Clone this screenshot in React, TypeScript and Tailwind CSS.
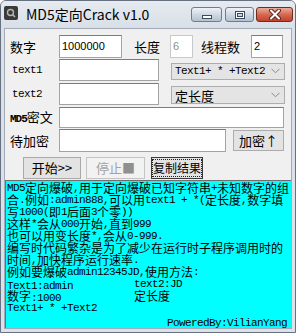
import React from "react";

const CJK = "font-['Noto_Sans_CJK_SC',sans-serif]";
const MONO = "font-['Liberation_Mono','Noto_Sans_CJK_SC',monospace] text-[11px] tracking-[-0.6px]";

// split a string in runs so ascii gets the narrow monospace, chinese the CJK font
function Mixed({ text, cjkSize = "text-[12px]" }: { text: string; cjkSize?: string }) {
  const runs = text.match(/[\x00-\x7f]+|[^\x00-\x7f]+/g) || [];
  return (
    <>
      {runs.map((r, i) =>
        /^[\x00-\x7f]/.test(r) ? (
          <span key={i} className={`${MONO} leading-[12px]`}>
            {r}
          </span>
        ) : (
          <span key={i} className={`${CJK} ${cjkSize} leading-[12px]`}>
            {r}
          </span>
        )
      )}
    </>
  );
}

function Label({ children, className = "" }: { children: React.ReactNode; className?: string }) {
  return (
    <div className={`shrink-0 text-[13px] leading-none text-black ${CJK} ${className}`}>
      {children}
    </div>
  );
}

function Input({ value = "", className = "", disabled = false }: { value?: string; className?: string; disabled?: boolean }) {
  return (
    <div
      className={`shrink-0 h-full bg-white border flex items-center pl-[2px] font-['Liberation_Sans',sans-serif] text-[11px] ${
        disabled
          ? "border-[#c9c9c9] text-[#8e8e8e]"
          : "border-[#a3a3a3] border-t-[#7c7c7c] text-black"
      } ${className}`}
    >
      {value}
    </div>
  );
}

function Select({ children, className = "" }: { children: React.ReactNode; className?: string }) {
  return (
    <div
      className={`shrink-0 relative bg-[#e4e4e4] border border-[#adadad] flex items-center pl-[3px] leading-none ${className}`}
    >
      {children}
      <svg className="absolute right-[4px] top-1/2 -translate-y-1/2" width="9" height="6" viewBox="0 0 9 6">
        <path d="M0.5 0.8 L4.5 4.8 L8.5 0.8" fill="none" stroke="#8a8a8a" strokeWidth="1" />
      </svg>
    </div>
  );
}

function Line({ children }: { children: React.ReactNode }) {
  return <div className="h-[12px] leading-[12px] whitespace-pre flex items-center shrink-0">{children}</div>;
}

function CaptionButton({ kind }: { kind: "min" | "max" | "close" }) {
  if (kind === "close") {
    return (
      <div className="w-[37px] h-[15px] rounded-[3px] border border-[#6f2b20] bg-gradient-to-b from-[#e9ad9c] via-[#d56a52] to-[#c2402a] flex items-center justify-center">
        <svg width="14" height="11" viewBox="0 0 14 11">
          <path d="M3 1.5 L11 9.5 M11 1.5 L3 9.5" stroke="#5a2a22" strokeWidth="4" strokeLinecap="round" />
          <path d="M3 1.5 L11 9.5 M11 1.5 L3 9.5" stroke="#ffffff" strokeWidth="2" strokeLinecap="round" />
        </svg>
      </div>
    );
  }
  return (
    <div
      className={`${kind === "min" ? "w-[31px]" : "w-[29px]"} h-[15px] rounded-[3px] border border-[#6d7c90] bg-gradient-to-b from-[#eef2f6] via-[#cfd9e4] to-[#b3c2d3] flex items-center justify-center`}
    >
      {kind === "min" ? (
        <svg width="12" height="10" viewBox="0 0 12 10">
          <rect x="1.5" y="5.5" width="9" height="3" fill="#ffffff" stroke="#3c4a5c" strokeWidth="1" />
        </svg>
      ) : (
        <svg width="12" height="10" viewBox="0 0 12 10">
          <rect x="1.5" y="1.5" width="9" height="7" fill="none" stroke="#3c4a5c" strokeWidth="1" />
          <rect x="2.5" y="2.5" width="7" height="5" fill="none" stroke="#ffffff" strokeWidth="1" />
          <rect x="3.5" y="3.5" width="5" height="3" fill="none" stroke="#3c4a5c" strokeWidth="1" />
        </svg>
      )}
    </div>
  );
}

export default function App() {
  return (
    <div className="w-[296px] h-[333px] bg-[#dae1e9] border border-[#677181] rounded-t-[6px] flex flex-col overflow-hidden">
      {/* title bar */}
      <div className="h-[27px] shrink-0 flex items-start bg-gradient-to-b from-[#e6ebf0] to-[#d8dfe7]">
        <div className="ml-[3px] mt-[5px] w-[14px] h-[14px] rounded-[2px] bg-[#3a3a3a] flex items-center justify-center">
          <svg width="10" height="10" viewBox="0 0 10 10">
            <circle cx="4.5" cy="4.5" r="3" fill="none" stroke="#b5b5b5" strokeWidth="1.4" />
            <path d="M6.5 6.5 L9 9" stroke="#b5b5b5" strokeWidth="1.6" />
          </svg>
        </div>
        <div className={`ml-[8px] mt-[4px] text-[14px] leading-[18px] text-black ${CJK}`}>MD5定向Crack v1.0</div>
        <div className="ml-auto mr-[2px] mt-[6px] flex">
          <CaptionButton kind="min" />
          <div className="w-[3px]" />
          <CaptionButton kind="max" />
          <div className="w-[2px]" />
          <CaptionButton kind="close" />
        </div>
      </div>

      {/* client area */}
      <div className="mx-[3px] mb-[3px] flex-1 min-h-0 bg-[#f0f0f0] border border-[#a2abb7] flex flex-col">
        <div className="mt-[6px] h-[23px] shrink-0 flex items-center">
          <Label className="ml-[5px] w-[49px]">数字</Label>
          <Input value="1000000" className="w-[63px]" />
          <Label className="ml-[12px] w-[36px]">长度</Label>
          <Input value="6" disabled className="w-[23px]" />
          <Label className="ml-[8px] w-[50px]">线程数</Label>
          <Input value="2" className="w-[32px]" />
        </div>

        <div className="mt-[1px] h-[22px] shrink-0 flex items-center">
          <div className={`ml-[7px] w-[47px] shrink-0 ${MONO}`}>text1</div>
          <Input className="w-[100px]" />
          <Select className="ml-[12px] w-[114px] h-[17px] mt-[2px]">
            <span className={MONO}>Text1+ * +Text2</span>
          </Select>
        </div>

        <div className="mt-[2px] h-[22px] shrink-0 flex items-center">
          <div className={`ml-[7px] w-[47px] shrink-0 ${MONO}`}>text2</div>
          <Input className="w-[100px]" />
          <Select className="ml-[12px] w-[114px] h-[18px] mt-[2px]">
            <span className={`${CJK} text-[13px]`}>定长度</span>
          </Select>
        </div>

        <div className="mt-[2px] h-[21px] shrink-0 flex items-center">
          <Label className="ml-[5px] w-[49px]">
            <span className="font-['Liberation_Mono',monospace] font-bold text-[11px] tracking-[-1px]">MD5</span>
            密文
          </Label>
          <Input className="w-[225px]" />
        </div>

        <div className="mt-[1px] h-[23px] shrink-0 flex items-center">
          <Label className="ml-[5px] w-[49px]">待加密</Label>
          <Input className="w-[167px]" />
          <div className={`ml-[7px] w-[51px] h-[21px] shrink-0 bg-[#e3e3e3] border border-[#acacac] flex items-center justify-center text-[13px] text-black ${CJK}`}>
            加密↑
          </div>
        </div>

        <div className="mt-[5px] h-[22px] shrink-0 flex items-center">
          <div className={`ml-[18px] w-[58px] h-full shrink-0 bg-[#e3e3e3] border border-[#a9a9a9] flex items-center justify-center text-[13px] text-black ${CJK}`}>
            开始&gt;&gt;
          </div>
          <div className={`ml-[5px] w-[59px] h-full shrink-0 bg-[#f2f2f2] border border-[#c4c4c4] flex items-center justify-center text-[13px] text-[#a3a3a3] ${CJK}`}>
            停止<span className="text-[#8f8f8f]">■</span>
          </div>
          <div className={`ml-[6px] w-[52px] h-full shrink-0 bg-[#e3e3e3] border border-[#3a3a3a] flex items-center justify-center text-[12px] text-black whitespace-nowrap ${CJK}`}>
            <span className="border border-dotted border-[#222] leading-[16px]">复制结果</span>
          </div>
        </div>

        <div className="mt-[1px] flex-1 min-h-0 bg-[#00ffff] border-t border-l border-[#6e6e6e] pl-[1px] pt-[1px] flex flex-col text-black">
          <Line><Mixed text="MD5定向爆破,用于定向爆破已知字符串+未知数字的组" /></Line>
          <Line><Mixed text="合.例如:admin888,可以用text1 + *(定长度,数字填" /></Line>
          <Line><Mixed text="写1000(即1后面3个零))" /></Line>
          <Line><Mixed text="这样*会从000开始,直到999" /></Line>
          <Line><Mixed text="也可以用变长度*,会从0-999." /></Line>
          <Line><Mixed text="编写时代码繁杂是为了减少在运行时子程序调用时的" /></Line>
          <Line><Mixed text="时间,加快程序运行速率." /></Line>
          <Line><Mixed text="例如要爆破admin12345JD,使用方法:" /></Line>
          <Line>
            <span className="w-[127px] shrink-0"><Mixed text="Text1:admin" /></span>
            <Mixed text="text2:JD" />
          </Line>
          <Line>
            <span className="w-[127px] shrink-0"><Mixed text="数字:1000" /></span>
            <Mixed text="定长度" />
          </Line>
          <Line><Mixed text="Text1+ * +Text2" /></Line>
          <div className="h-[12px] leading-[12px] shrink-0 text-right pr-[4px]">
            <Mixed text="PoweredBy:VilianYang" />
          </div>
        </div>
      </div>
    </div>
  );
}
